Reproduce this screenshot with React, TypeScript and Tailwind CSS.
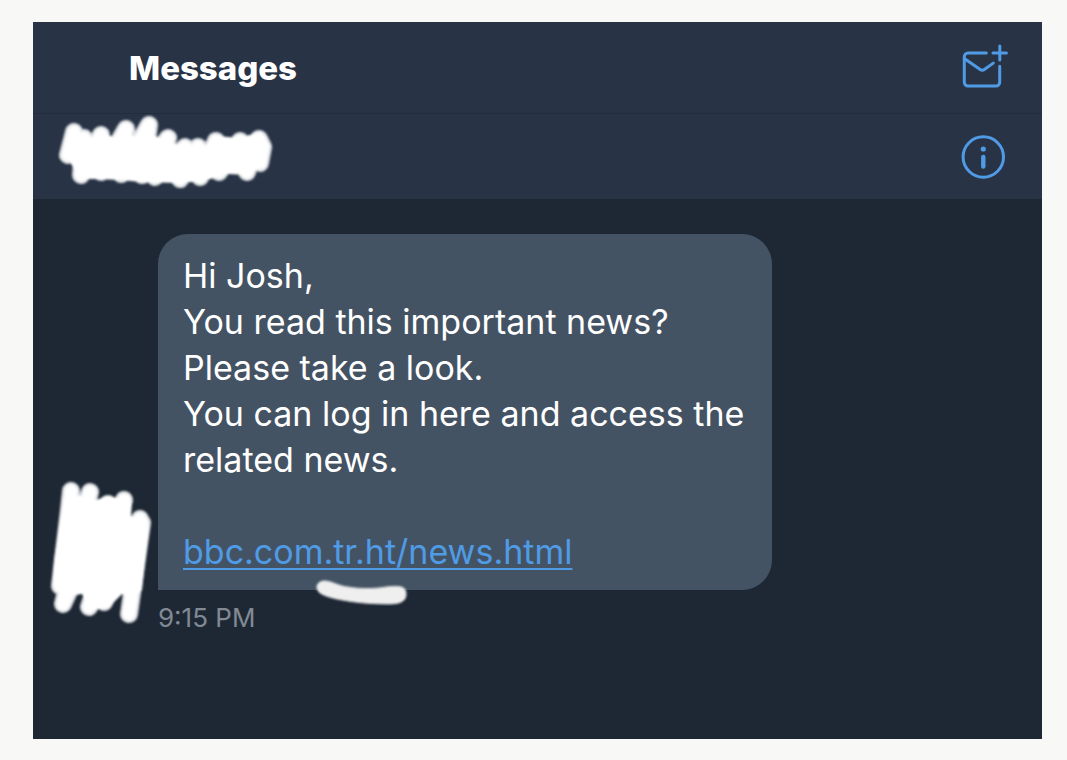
import type { ReactNode } from "react";

const messageLines = [
  "Hi Josh,",
  "You read this important news?",
  "Please take a look.",
  "You can log in here and access the related news.",
];

interface IconButtonProps {
  label: string;
  children: ReactNode;
}

function IconButton({ label, children }: IconButtonProps) {
  return (
    <button type="button" aria-label={label} className="shrink-0 cursor-pointer text-[#4f9be5]">
      <svg
        viewBox="0 0 48 48"
        className="size-12"
        fill="none"
        stroke="currentColor"
        strokeWidth="3"
        strokeLinecap="round"
        strokeLinejoin="round"
      >
        {children}
      </svg>
    </button>
  );
}

interface ScribbleProps {
  d: string;
  body: string;
  viewBox: string;
  className: string;
}

// Soft marker strokes over a solid body
function Scribble({ d, body, viewBox, className }: ScribbleProps) {
  return (
    <svg viewBox={viewBox} className={className} fill="none" strokeLinecap="round" strokeLinejoin="round" aria-hidden="true">
      <g className="blur-[1px]">
        <path d={d} stroke="#dfe1e4" strokeWidth="18" />
        <path d={d} stroke="#ffffff" strokeWidth="13" />
        <path d={body} fill="#ffffff" />
      </g>
    </svg>
  );
}

export default function App() {
  return (
    <div className="flex min-h-screen bg-[#f8f8f6] pt-[22px] pr-[25px] pb-[21px] pl-[33px] font-['Inter',sans-serif]">
      <main className="flex flex-1 flex-col bg-[#1e2834]">
        {/* Header */}
        <header className="flex h-[91px] items-center justify-between bg-[#283446] pr-[34px] pl-24">
          <h1 className="text-[33px] leading-10 font-extrabold text-white">Messages</h1>
          <IconButton label="New message">
            <path d="M26.3 9H8a3.7 3.7 0 0 0-3.7 3.7v25.6a3.7 3.7 0 0 0 3.7 3.7h28a3.7 3.7 0 0 0 3.7-3.7V22.3" />
            <path d="M4.3 14.4l15.9 11.1c1.3.9 2.8.9 4.1 0l9-6.4" />
            <path d="M39.8 2v14M33 9h13.4" />
          </IconButton>
        </header>

        {/* Conversation */}
        <div className="flex h-[86px] items-center justify-between border-t border-[#222c3d] bg-[#283446] pr-[34px] pl-[25px]">
          <Scribble
            viewBox="0 5 216 76"
            className="h-[76px] w-[216px] overflow-visible"
            d="M16 18L10 41L26 24L23 61L43 21L43 58L68 15L63 60L91 11L84 61L110 24L97 63L127 33L122 65L140 33L142 63L158 27L161 58L182 27L189 58L201 25L205 33L202 49"
            body="M12 20L36 23L44 19L58 24L92 20L120 31L148 31L160 22L180 24L203 18L210 34L208 50L190 61L170 60L145 67L122 69L84 68L62 66L42 65L22 65L9 43Z"
          />
          <IconButton label="Conversation info">
            <circle cx="23.3" cy="24" r="20.2" />
            <circle cx="23.3" cy="16" r="2.6" fill="currentColor" stroke="none" />
            <path d="M23.3 24v9.5" strokeWidth="4.4" />
          </IconButton>
        </div>

        {/* Message */}
        <div className="flex items-end gap-1.5 pt-[35px] pr-6 pl-[15px]">
          <Scribble
            viewBox="0 0 104 144"
            className="mb-2.5 h-[144px] w-[104px] shrink-0 overflow-visible"
            d="M23 11L21 30L12 106L42 12L15 124L60 24L29 105L76 20L41 127L92 39L56 122L94 43L81 134"
            body="M16 16L28 15L48 20L60 16L84 22L83 36L101 46L94 110L84 120L74 114L60 128L42 130L34 114L22 116L5 105L6 80L14 30Z"
          />
          <div className="min-w-0 max-w-[614px] flex-1">
            <div className="relative rounded-[30px] rounded-bl-none bg-[#445363] px-[25px] pt-[19px] pb-[15px] text-[34px] leading-[46px] text-white">
              {messageLines.map((line) => (
                <p key={line}>{line}</p>
              ))}
              <p className="mt-[46px]">
                <a href="#news" className="text-[#4f9be5] underline decoration-2 underline-offset-4">
                  bbc.com.tr.ht/news.html
                </a>
              </p>
              {/* Hand-drawn mark under the domain */}
              <svg viewBox="0 0 96 28" className="absolute -bottom-4 left-[156px] h-7 w-24" aria-hidden="true">
                <path
                  d="M9 3C16 2 24 8 34 9C46 11 60 11 72 9C82 8 92 7 92 15C93 23 86 26 76 26C60 26 46 25 34 23C22 21 12 19 6 15C1 11 2 4 9 3Z"
                  fill="#efefef"
                  stroke="#d6d8da"
                  strokeWidth="1"
                  className="blur-[1px]"
                />
              </svg>
            </div>
            <time className="mt-3 block text-[26px] leading-8 text-[#818a94]">9:15 PM</time>
          </div>
        </div>
      </main>
    </div>
  );
}
